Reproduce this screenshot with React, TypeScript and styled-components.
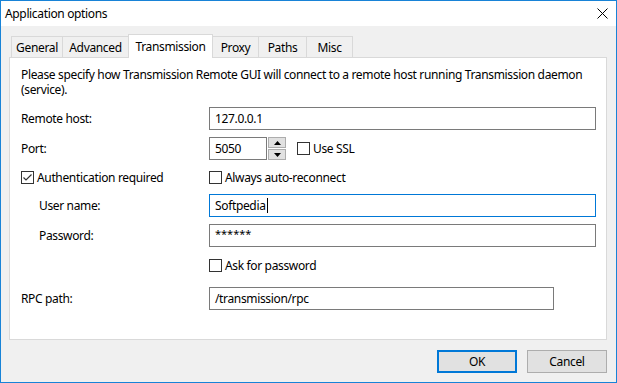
import React from 'react';
import styled, { createGlobalStyle } from 'styled-components';

const GlobalStyle = createGlobalStyle`
  html, body {
    margin: 0;
    padding: 0;
    background: #ffffff;
  }
  body {
    font-family: "Noto Sans", "Liberation Sans", sans-serif;
    font-size: 12px;
    letter-spacing: -0.35px;
    color: #000000;
  }
  * {
    box-sizing: border-box;
  }
`;

const Window = styled.div`
  width: 617px;
  height: 383px;
  border: 1px solid #1883d7;
  display: flex;
  flex-direction: column;
  background: #f0f0f0;
`;

const TitleBar = styled.div`
  height: 25px;
  flex: none;
  background: #ffffff;
  display: flex;
  align-items: center;
  justify-content: space-between;
  padding: 0 8px 0 4px;
`;

const Title = styled.span`
  line-height: 16px;
`;

const Body = styled.div`
  flex: 1;
  display: flex;
  flex-direction: column;
  padding: 8px 9px 9px 8px;
`;

const TabStrip = styled.div`
  height: 23px;
  display: flex;
  align-items: flex-end;
  padding-left: 2px;
  position: relative;
  z-index: 1;
`;

const Tab = styled.div<{ $w: number; $active?: boolean }>`
  width: ${(p) => p.$w}px;
  height: ${(p) => (p.$active ? 24 : 21)}px;
  margin-left: -1px;
  margin-bottom: ${(p) => (p.$active ? -1 : 0)}px;
  border: 1px solid #d9d9d9;
  border-bottom: ${(p) => (p.$active ? 'none' : '0')};
  background: ${(p) => (p.$active ? '#ffffff' : '#f0f0f0')};
  display: flex;
  align-items: ${(p) => (p.$active ? 'flex-start' : 'center')};
  padding-top: ${(p) => (p.$active ? 3 : 0)}px;
  justify-content: center;

  &:first-child {
    margin-left: 0;
  }
`;

const Panel = styled.div`
  height: 283px;
  flex: none;
  background: #ffffff;
  border: 1px solid #d9d9d9;
  padding: 9px 10px 0 11px;
`;

const Intro = styled.p`
  margin: 0 0 10px 0;
  line-height: 15px;
`;

const Row = styled.div<{ $gap?: number }>`
  display: grid;
  grid-template-columns: 188px 1fr;
  align-items: center;
  height: 23px;
  margin-top: ${(p) => p.$gap ?? 0}px;
`;

const Label = styled.span<{ $indent?: boolean }>`
  padding-left: ${(p) => (p.$indent ? 18 : 0)}px;
`;

const Input = styled.div<{ $focus?: boolean; $w?: number }>`
  height: 23px;
  width: ${(p) => (p.$w ? `${p.$w}px` : '100%')};
  border: 1px solid ${(p) => (p.$focus ? '#0078d7' : '#7a7a7a')};
  background: #ffffff;
  display: flex;
  align-items: center;
  padding-left: 5px;
`;

const Caret = styled.span`
  display: inline-block;
  width: 1px;
  height: 15px;
  background: #000000;
  margin-left: 1px;
`;

const Masked = styled.span`
  font-size: 11px;
  letter-spacing: 0;
  transform: translateY(-2px);
`;

const Inline = styled.div`
  display: flex;
  align-items: center;
`;

const Spin = styled.div`
  width: 18px;
  height: 23px;
  display: flex;
  flex-direction: column;
  gap: 1px;
  margin-left: 1px;
`;

const SpinButton = styled.div`
  flex: 1;
  background: #e1e1e1;
  border: 1px solid #adadad;
  display: flex;
  align-items: center;
  justify-content: center;
`;

const Check = styled.label<{ $ml?: number }>`
  display: flex;
  align-items: center;
  gap: 3px;
  margin-left: ${(p) => p.$ml ?? 0}px;
`;

const Box = styled.span`
  width: 13px;
  height: 13px;
  border: 1px solid #333333;
  background: #ffffff;
  display: flex;
  align-items: center;
  justify-content: center;
`;

const ButtonRow = styled.div`
  margin-top: 10px;
  display: flex;
  justify-content: flex-end;
  gap: 10px;
`;

const Button = styled.button<{ $default?: boolean }>`
  width: 80px;
  height: 23px;
  font-family: inherit;
  font-size: inherit;
  letter-spacing: inherit;
  background: #e1e1e1;
  border: ${(p) => (p.$default ? '2px solid #0078d7' : '1px solid #adadad')};
  padding: 0;
  color: #000000;
`;

function Checkbox({ checked, label, ml }: { checked?: boolean; label: string; ml?: number }) {
  return (
    <Check $ml={ml}>
      <Box>
        {checked && (
          <svg width="11" height="11" viewBox="0 0 11 11">
            <path d="M1.5 5.5 L4 8 L9.5 2.5" fill="none" stroke="#333" strokeWidth="1.2" />
          </svg>
        )}
      </Box>
      <span>{label}</span>
    </Check>
  );
}

export default function App() {
  const tabs = [
    { name: 'General', w: 52 },
    { name: 'Advanced', w: 67 },
    { name: 'Transmission', w: 85, active: true },
    { name: 'Proxy', w: 47 },
    { name: 'Paths', w: 49 },
    { name: 'Misc', w: 47 },
  ];

  return (
    <>
      <GlobalStyle />
      <Window>
        <TitleBar>
          <Title>Application options</Title>
          <svg width="11" height="11" viewBox="0 0 11 11">
            <path d="M0.5 0.5 L10.5 10.5 M10.5 0.5 L0.5 10.5" stroke="#000" strokeWidth="1" />
          </svg>
        </TitleBar>
        <Body>
          <TabStrip>
            {tabs.map((t) => (
              <Tab key={t.name} $w={t.w} $active={t.active}>
                {t.name}
              </Tab>
            ))}
          </TabStrip>
          <Panel>
            <Intro>
              Please specify how Transmission Remote GUI will connect to a remote host running Transmission daemon
              (service).
            </Intro>
            <Row>
              <Label>Remote host:</Label>
              <Input>127.0.0.1</Input>
            </Row>
            <Row $gap={7}>
              <Label>Port:</Label>
              <Inline>
                <Input $w={58}>5050</Input>
                <Spin>
                  <SpinButton>
                    <svg width="7" height="4" viewBox="0 0 7 4">
                      <path d="M0 4 L3.5 0 L7 4 Z" fill="#000" />
                    </svg>
                  </SpinButton>
                  <SpinButton>
                    <svg width="7" height="4" viewBox="0 0 7 4">
                      <path d="M0 0 L3.5 4 L7 0 Z" fill="#000" />
                    </svg>
                  </SpinButton>
                </Spin>
                <Checkbox label="Use SSL" ml={11} />
              </Inline>
            </Row>
            <Row $gap={6}>
              <Checkbox checked label="Authentication required" />
              <Checkbox label="Always auto-reconnect" />
            </Row>
            <Row $gap={5}>
              <Label $indent>User name:</Label>
              <Input $focus>
                Softpedia
                <Caret />
              </Input>
            </Row>
            <Row $gap={7}>
              <Label $indent>Password:</Label>
              <Input>
                <Masked>******</Masked>
              </Input>
            </Row>
            <Row $gap={7}>
              <span />
              <Checkbox label="Ask for password" />
            </Row>
            <Row $gap={10}>
              <Label>RPC path:</Label>
              <Input $w={345}>/transmission/rpc</Input>
            </Row>
          </Panel>
          <ButtonRow>
            <Button $default>OK</Button>
            <Button>Cancel</Button>
          </ButtonRow>
        </Body>
      </Window>
    </>
  );
}
